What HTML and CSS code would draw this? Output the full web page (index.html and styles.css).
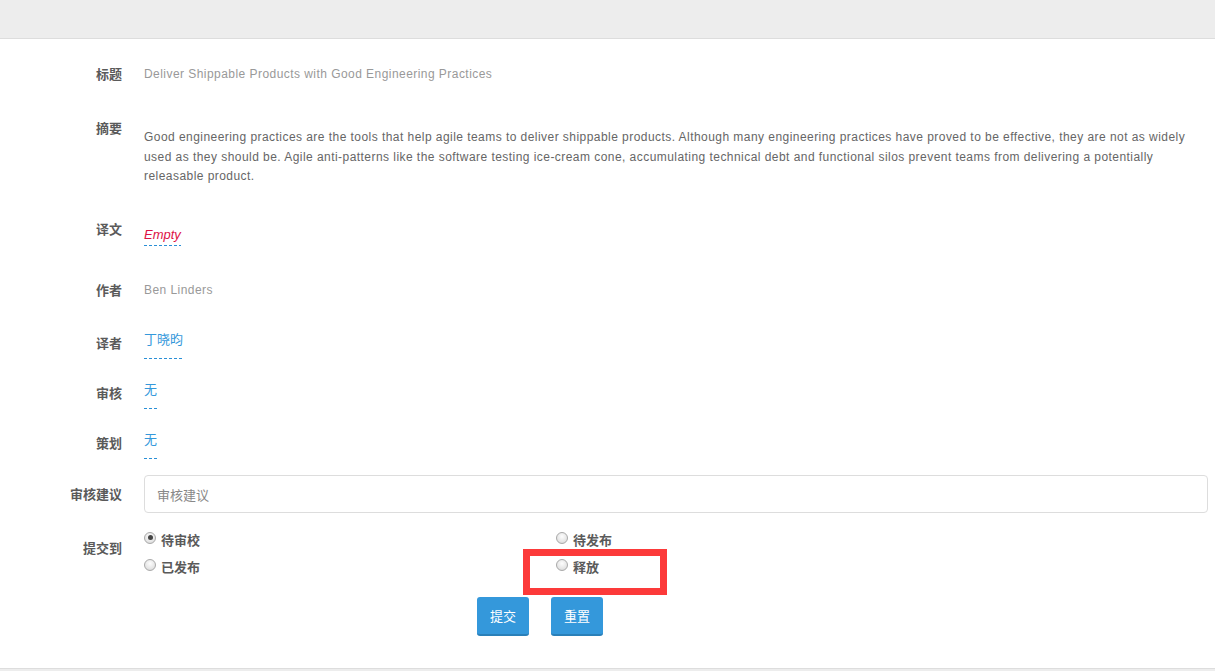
FILE: index.html
```html
<!DOCTYPE html>
<html lang="zh">
<head>
<meta charset="utf-8">
<title>审核</title>
<link rel="stylesheet" href="styles.css">
</head>
<body>
<header class="topbar"></header>
<main class="form">
  <div class="row row-title">
    <div class="label">标题</div>
    <div class="value muted">Deliver Shippable Products with Good Engineering Practices</div>
  </div>
  <div class="row row-abstract">
    <div class="label">摘要</div>
    <div class="value abstract">Good engineering practices are the tools that help agile teams to deliver shippable products. Although many engineering practices have proved to be effective, they are not as widely used as they should be. Agile anti-patterns like the software testing ice-cream cone, accumulating technical debt and functional silos prevent teams from delivering a potentially releasable product.</div>
  </div>
  <div class="row row-translation">
    <div class="label">译文</div>
    <div class="value value-empty"><span class="editable empty">Empty</span></div>
  </div>
  <div class="row row-author">
    <div class="label">作者</div>
    <div class="value muted">Ben Linders</div>
  </div>
  <div class="row row-person">
    <div class="label label-low">译者</div>
    <div class="value"><span class="editable link">丁晓昀</span></div>
  </div>
  <div class="row row-person">
    <div class="label label-low">审核</div>
    <div class="value"><span class="editable link">无</span></div>
  </div>
  <div class="row row-person row-last-person">
    <div class="label label-low">策划</div>
    <div class="value"><span class="editable link">无</span></div>
  </div>
  <div class="row row-advice">
    <div class="label label-input">审核建议</div>
    <div class="value"><input class="input" type="text" placeholder="审核建议"></div>
  </div>
  <div class="row row-submit">
    <div class="label label-radio">提交到</div>
    <div class="value radios">
      <label class="radio"><span class="dot checked"></span>待审校</label>
      <label class="radio"><span class="dot"></span>待发布</label>
      <label class="radio"><span class="dot"></span>已发布</label>
      <label class="radio radio-marked"><span class="dot"></span>释放<span class="highlight"></span></label>
    </div>
  </div>
  <div class="actions">
    <button class="btn" type="button">提交</button>
    <button class="btn" type="button">重置</button>
  </div>
</main>
<footer class="bottombar"></footer>
</body>
</html>
```
FILE: styles.css
```css
html, body {
  margin: 0;
  padding: 0;
  overflow: hidden;
  background: #fff;
}
body {
  font-family: "Liberation Sans", "Noto Sans CJK SC", sans-serif;
  font-size: 12px;
  color: #555;
}
.topbar {
  height: 38px;
  background: #ededed;
  border-bottom: 1px solid #dddddd;
}
.form {
  padding-top: 25px;
}
.row {
  display: grid;
  grid-template-columns: 122px 1fr;
  column-gap: 22px;
  padding-right: 7px;
  align-items: start;
}
.label {
  text-align: right;
  font-family: "Noto Sans CJK SC", "Liberation Sans", sans-serif;
  font-weight: bold;
  font-size: 13px;
  line-height: 20px;
  color: #5a5a5a;
}
.value {
  line-height: 20px;
}
.muted {
  color: #999;
  font-size: 12px;
  letter-spacing: 0.45px;
}
.row-title { height: 54px; }
.row-abstract { height: 101px; }
.abstract {
  padding-top: 10px;
  line-height: 19.5px;
  color: #666;
  font-size: 12px;
  letter-spacing: 0.45px;
}
.row-translation { height: 61px; }
.value-empty { padding-top: 6px; }
.editable {
  display: inline-block;
  background: repeating-linear-gradient(to right, #2a8fd6 0 3px, transparent 3px 5px) left bottom / 100% 1px no-repeat;
}
.empty {
  font-style: italic;
  color: #dd1144;
  font-size: 13px;
  line-height: 18px;
  padding-bottom: 2px;
}
.row-author { height: 49px; }
.row-person { height: 50px; }
.row-last-person { height: 46px; }
.label-low { padding-top: 4px; }
.link {
  color: #3498db;
  font-family: "Noto Sans CJK SC", sans-serif;
  font-size: 13px;
  line-height: 20px;
  padding-bottom: 10px;
}
.row-advice { height: 54px; }
.label-input { padding-top: 9px; }
.input {
  box-sizing: border-box;
  width: 100%;
  height: 38px;
  border: 1px solid #dddddd;
  border-radius: 4px;
  padding: 0 12px;
  font-family: "Noto Sans CJK SC", sans-serif;
  font-size: 13px;
  color: #555;
  outline: none;
}
.input::placeholder { color: #888; }
.row-submit { height: 68px; }
.label-radio { padding-top: 9px; }
.radios {
  display: grid;
  grid-template-columns: 412px 1fr;
  row-gap: 5px;
}
.radio {
  position: relative;
  display: flex;
  align-items: center;
  height: 22px;
  padding-top: 0;
  font-family: "Noto Sans CJK SC", sans-serif;
  font-weight: bold;
  font-size: 13px;
  color: #5a5a5a;
}
.dot {
  box-sizing: border-box;
  width: 12px;
  height: 12px;
  margin-right: 5px;
  margin-top: -5px;
  border-radius: 50%;
  border: 1px solid #a9a9a9;
  background: radial-gradient(circle at 50% 35%, #fdfdfd 0%, #e4e4e4 65%, #cfcfcf 100%);
  display: flex;
  align-items: center;
  justify-content: center;
}
.dot.checked::after {
  content: "";
  width: 5px;
  height: 5px;
  border-radius: 50%;
  background: #444;
}
.highlight {
  position: absolute;
  left: -33px;
  top: -7px;
  width: 144px;
  height: 46px;
  box-sizing: border-box;
  border: 7px solid #fc3a3a;
  pointer-events: none;
}
.actions {
  display: flex;
  gap: 22px;
  padding-left: 477px;
  padding-bottom: 32px;
}
.btn {
  width: 52px;
  height: 39px;
  border: none;
  border-bottom: 2px solid #2a80b9;
  border-radius: 3px;
  background: #3498db;
  color: #fff;
  font-family: "Noto Sans CJK SC", sans-serif;
  font-size: 13px;
  padding: 0;
}
.bottombar {
  height: 2px;
  background: #ededed;
  border-top: 1px solid #dddddd;
}
```
